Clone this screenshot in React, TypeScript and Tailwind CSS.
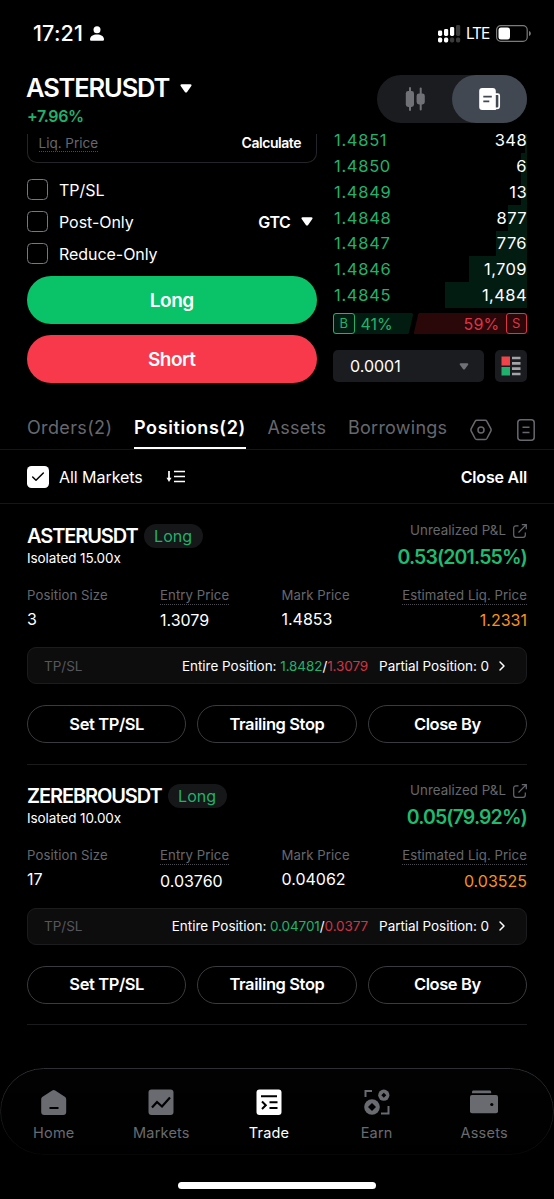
import type { ReactNode } from "react"
import { Check, ChevronRight } from "lucide-react"

// Order book bids, depth is the bar width in px
const bids = [
    { price: "1.4851", size: "348", depth: 2 },
    { price: "1.4850", size: "6", depth: 6 },
    { price: "1.4849", size: "13", depth: 6 },
    { price: "1.4848", size: "877", depth: 19 },
    { price: "1.4847", size: "776", depth: 31 },
    { price: "1.4846", size: "1,709", depth: 58 },
    { price: "1.4845", size: "1,484", depth: 82 },
]

const positions = [
    {
        symbol: "ASTERUSDT",
        mode: "Isolated 15.00x",
        pnl: "0.53(201.55%)",
        size: "3",
        entry: "1.3079",
        mark: "1.4853",
        liq: "1.2331",
        takeProfit: "1.8482",
        stopLoss: "1.3079",
    },
    {
        symbol: "ZEREBROUSDT",
        mode: "Isolated 10.00x",
        pnl: "0.05(79.92%)",
        size: "17",
        entry: "0.03760",
        mark: "0.04062",
        liq: "0.03525",
        takeProfit: "0.04701",
        stopLoss: "0.0377",
    },
]

type Position = (typeof positions)[number]

function Caret({ className }: { className?: string }) {
    return (
        <svg viewBox="0 0 12 9" className={className} fill="currentColor">
            <path d="M1.6 0.3h8.8c1 0 1.5 1 .9 1.8L7.1 7.9c-.5.8-1.7.8-2.2 0L.7 2.1C.1 1.3.6.3 1.6.3z" />
        </svg>
    )
}

function StatusBar() {
    return (
        <div className="flex h-[67px] items-center justify-between pl-[33px] pr-[23px]">
            <div className="flex items-center gap-[7px]">
                <span className="text-[21.5px] font-medium tracking-[0.2px]">17:21</span>
                <svg viewBox="0 0 14 15" className="h-[15px] w-[14px]" fill="currentColor">
                    <circle cx="7" cy="3.7" r="3.5" />
                    <path d="M0 13.2C.3 10.3 3 8.6 7 8.6s6.7 1.7 7 4.6c0 1-.6 1.5-1.5 1.5h-11C.6 14.7 0 14.2 0 13.2z" />
                </svg>
            </div>
            <div className="flex items-center">
                <svg viewBox="0 0 23 18" className="mr-[5px] h-[18px] w-[23px]" fill="currentColor">
                    <rect x="0" y="5.5" width="4.2" height="5.5" rx="1.4" />
                    <rect x="6" y="4" width="4.2" height="7" rx="1.4" />
                    <rect x="12" y="2" width="4.2" height="9" rx="1.4" />
                    <rect x="18" y="0" width="4.2" height="11" rx="1.4" fill="#3a3a3a" />
                    <rect x="0" y="12.6" width="4.2" height="4.8" rx="1.6" />
                    <rect x="6" y="12.6" width="4.2" height="4.8" rx="1.6" />
                    <rect x="12" y="12.6" width="4.2" height="4.8" rx="1.6" fill="#3a3a3a" />
                    <rect x="18" y="12.6" width="4.2" height="4.8" rx="1.6" fill="#3a3a3a" />
                </svg>
                <span className="mr-[7px] text-[15.5px] tracking-[-1.2px]">LTE</span>
                <svg viewBox="0 0 35 17" className="h-[17px] w-[35px]">
                    <rect x="0.6" y="0.6" width="30.6" height="15.8" rx="4.2" fill="none" stroke="#7b7b7b" strokeWidth="1.2" />
                    <rect x="2.5" y="2.5" width="11.5" height="12" rx="2.5" fill="white" />
                    <path d="M33 6v5c1.3-.5 1.8-1.5 1.8-2.5S34.3 6.5 33 6z" fill="#7b7b7b" />
                </svg>
            </div>
        </div>
    )
}

function Header() {
    return (
        <header className="flex h-[67px] justify-between pl-[26px] pr-[27px]">
            <div>
                <div className="flex h-[42px] items-center gap-[11px]">
                    <h1 className="text-[25.5px] font-semibold tracking-[-1.15px]">ASTERUSDT</h1>
                    <Caret className="h-[9px] w-[12px]" />
                </div>
                <p className="ml-px mt-[-3px] text-[16px] font-semibold leading-[20px] tracking-[-0.4px] text-[#20b26c]">+7.96%</p>
            </div>
            <div className="mt-2 flex h-12 w-[150px] rounded-full bg-[#1b1c20]">
                <div className="flex w-[75px] items-center justify-center">
                    <svg viewBox="0 0 20 24" className="h-6 w-5" fill="#6f7176">
                        <rect x="0.8" y="4" width="8.2" height="16" rx="2.4" />
                        <rect x="4" y="0" width="2" height="24" rx="1" />
                        <rect x="11.6" y="6.5" width="8.2" height="11" rx="2.4" />
                        <rect x="14.7" y="0.5" width="2" height="23" rx="1" />
                    </svg>
                </div>
                <div className="flex w-[75px] items-center justify-center rounded-full bg-[#414852]">
                    <svg viewBox="0 0 22 22" className="h-[22px] w-[22px]">
                        <path d="M15 6.2h3.8c.9 0 1.4.5 1.4 1.4v10.6c0 1.4-.9 2.2-2.2 2.2h-4" fill="none" stroke="white" strokeWidth="1.7" />
                        <path d="M3.2 0h10.6c1.9 0 3 1.1 3 3v17c0 .8-.1 1.400.2 2H3.200C1.300 22 .2 20.900.2 19V3c0-1.900 1.100-3 3-3z" fill="white" />
                        <path d="M4.3 8.7h8.5M4.3 13.3h6" stroke="#414852" strokeWidth="1.7" />
                    </svg>
                </div>
            </div>
        </header>
    )
}

function Option({ label, children }: { label: string; children?: ReactNode }) {
    return (
        <div className="flex h-8 items-center">
            <span className="mr-[11px] size-[21.5px] rounded-[4.5px] border border-[#77787c]" />
            <span className="text-[16px] tracking-[-0.05px]">{label}</span>
            {children}
        </div>
    )
}

function OrderForm() {
    return (
        <div className="w-[290.5px]">
            <div className="flex h-[29px] items-start justify-between rounded-b-[10px] border border-t-0 border-[#242528] pl-[11px] pr-[15px]">
                <span className="mt-px border-b border-dotted border-[#4b4d52] text-[13.5px] leading-4 text-[#66686d]">Liq. Price</span>
                <span className="text-[14px] font-semibold leading-[18px] tracking-[-0.45px]">Calculate</span>
            </div>
            <div className="mt-[10.5px]">
                <Option label="TP/SL" />
                <Option label="Post-Only">
                    <span className="ml-auto mr-[10px] text-[16px] font-semibold tracking-[-0.4px]">GTC</span>
                    <Caret className="mr-[4.5px] h-[9px] w-[12px]" />
                </Option>
                <Option label="Reduce-Only" />
            </div>
            <button className="mt-[6.5px] block h-12 w-full rounded-full bg-[#0ac268] pt-[2px] text-[19px] font-semibold tracking-[-0.4px]">Long</button>
            <button className="mt-[11px] block h-12 w-full rounded-full bg-[#f8384b] pt-[2px] text-[19px] font-semibold tracking-[-0.5px]">Short</button>
        </div>
    )
}

function OrderBook() {
    return (
        <div className="w-[194px]">
            <div className="flex flex-col">
                {bids.map((bid) => (
                    <div
                        key={bid.price}
                        className="relative flex h-[25.8px] items-center justify-between text-[16.5px] leading-3 first:h-[19.2px] first:items-start"
                    >
                        <span className="absolute inset-y-0 right-0 bg-[#031c12]" style={{ width: bid.depth }} />
                        <span className="pl-px tracking-[0.7px] text-[#20b26c]">{bid.price}</span>
                        <span className="relative tracking-[0.4px]">{bid.size}</span>
                    </div>
                ))}
            </div>
            <div className="relative mt-[5px] flex h-[21.5px] items-center justify-between text-[16px]">
                <svg viewBox="0 0 194 21" preserveAspectRatio="none" className="absolute inset-0 h-full w-full">
                    <path d="M3 0h75c1.5 0 2.3.8 2 2l-4 17c-.4 1.4-1 2-2.5 2H3c-2 0-3-1-3-3V3c0-2 1-3 3-3z" fill="#031c12" />
                    <path d="M87 0h104c2 0 3 1 3 3v15c0 2-1 3-3 3H83c-1.5 0-2.3-.8-2-2l4-17c.3-1.4 1-2 2-2z" fill="#2a0709" />
                </svg>
                <div className="relative flex items-center gap-[6px] text-[#20b26c]">
                    <span className="flex size-[21.5px] items-center justify-center rounded-[3px] border-[1.5px] border-[#20b26c] text-[13px]">B</span>
                    <span>41%</span>
                </div>
                <div className="relative flex items-center gap-[6px] text-[#dd3547]">
                    <span className="tracking-[0.2px]">59%</span>
                    <span className="flex size-[21.5px] items-center justify-center rounded-[3px] border-[1.5px] border-[#dd3547] text-[13px]">S</span>
                </div>
            </div>
            <div className="mt-4 flex h-8 justify-between">
                <div className="flex w-[151px] items-center justify-between rounded-[5px] bg-[#1b1c20] pl-[17px] pr-[15px]">
                    <span className="text-[16px]">0.0001</span>
                    <Caret className="h-[7px] w-[10px] text-[#6f7176]" />
                </div>
                <div className="flex w-8 items-center justify-center rounded-[5px] bg-[#1b1c20]">
                    <svg viewBox="0 0 20 20" className="size-5">
                        <rect x="0.5" y="0.5" width="8.5" height="9" fill="#ef454a" />
                        <rect x="0.5" y="11" width="8.5" height="8.5" fill="#20b26c" />
                        <path d="M11 2h8.5M11 7.3h8.5M11 12.6h8.5M11 18h8.5" stroke="#a2a4a9" strokeWidth="2.7" />
                    </svg>
                </div>
            </div>
        </div>
    )
}

function Tabs() {
    return (
        <nav className="flex h-[43px] items-stretch border-b border-[#151618] pl-[27px] text-[18px] leading-[42px] text-[#66686d]">
            <span className="w-[107px] tracking-[0.35px]">Orders(2)</span>
            <span className="relative w-[112px] font-semibold tracking-[0.6px] text-white">
                Positions(2)
                <span className="absolute inset-x-0 bottom-0 h-[2.5px] bg-white" />
            </span>
            <span className="ml-[21.5px] w-[80.5px] tracking-[0.25px]">Assets</span>
            <span className="w-[121.5px] tracking-[0.25px]">Borrowings</span>
            <svg viewBox="0 0 22 22" className="mt-[11.5px] size-[22px]" fill="none" stroke="currentColor" strokeWidth="1.5">
                <path d="M6.8 1.3h8.4c.8 0 1.3.3 1.7 1l3.9 7.4c.4.8.4 1.6 0 2.4l-3.9 7.4c-.4.7-.9 1-1.7 1H6.8c-.8 0-1.3-.3-1.7-1l-3.9-7.4c-.4-.8-.4-1.6 0-2.4l3.9-7.4c.4-.7.9-1 1.7-1z" />
                <circle cx="11" cy="11" r="3" />
            </svg>
            <svg viewBox="0 0 18 22" className="ml-[25px] mt-[11.5px] h-[22px] w-[18px]" fill="none" stroke="currentColor" strokeWidth="1.5">
                <rect x="0.8" y="0.8" width="16.4" height="20.4" rx="3" />
                <path d="M5.5 8.3h7M5.5 13.5h7" />
            </svg>
        </nav>
    )
}

function MarketFilter() {
    return (
        <div className="flex h-[54px] items-center border-b border-[#151618] px-[27px] text-[16px]">
            <span className="mr-[10.5px] flex size-[21.5px] items-center justify-center rounded-[4.5px] bg-white text-black">
                <Check className="size-4" strokeWidth={2.2} />
            </span>
            <span className="tracking-[-0.05px]">All Markets</span>
            <svg viewBox="0 0 19 13" className="ml-[23px] h-[13px] w-[19px]" fill="none" stroke="white" strokeWidth="1.7">
                <path d="M8 1.5h11M8 6.5h11M8 11.5h11M3 1v8" />
                <path d="M0.5 7.8h5L3 12z" fill="white" stroke="none" />
            </svg>
            <span className="ml-auto font-semibold tracking-[-0.2px]">Close All</span>
        </div>
    )
}

function Stat({ label, value, underline, className = "" }: { label: string; value: string; underline?: boolean; className?: string }) {
    return (
        <div className={className}>
            <div className="text-[13.2px] leading-[18px] tracking-[0.08px] text-[#66686d]">
                {underline ? <span className="inline-block border-b border-dotted border-[#4b4d52] leading-[18px]">{label}</span> : label}
            </div>
            <div className={underline ? "mt-[3.5px] text-[16px] leading-6" : "mt-[3px] text-[16px] leading-6"}>{value}</div>
        </div>
    )
}

function PositionCard({ position }: { position: Position }) {
    return (
        <section className="mx-[27px] h-[260.3px] border-b border-[#1a1b1d] pt-[17.5px]">
            <div className="flex h-[48px] justify-between">
                <div>
                    <div className="flex h-[28px] items-center gap-[6px]">
                        <h2 className="text-[20px] font-semibold tracking-[-1.1px]">{position.symbol}</h2>
                        <span className="flex h-6 w-[59px] items-center justify-center rounded-full bg-[#151719] text-[16px] text-[#20b26c]">Long</span>
                    </div>
                    <p className="text-[13.5px] leading-[16px] tracking-[-0.1px]">{position.mode}</p>
                </div>
                <div className="text-right">
                    <div className="flex h-[18px] items-center justify-end gap-[7px] text-[13.3px] tracking-[0.05px] text-[#66686d]">
                        Unrealized P&L
                        <svg viewBox="0 0 14 14" className="size-[14px]" fill="none" stroke="currentColor" strokeWidth="1.2">
                            <path d="M5.5 1.8H3C1.5 1.8.7 2.6.7 4v7c0 1.5.8 2.3 2.3 2.3h7c1.5 0 2.3-.8 2.3-2.3V8.5M5.5 8.5l7.5-7.6M8.8.7h4.5v4.5" />
                        </svg>
                    </div>
                    <p className="mt-[5px] text-[19.5px] font-semibold leading-6 tracking-[-0.88px] text-[#1fbb71]">{position.pnl}</p>
                </div>
            </div>
            <div className="mt-[16px] flex h-[61.5px]">
                <Stat label="Position Size" value={position.size} className="w-[133px]" />
                <Stat label="Entry Price" value={position.entry} className="w-[121.5px]" underline />
                <Stat label="Mark Price" value={position.mark} />
                <Stat label="Estimated Liq. Price" value={position.liq} className="ml-auto text-right [&>div:last-child]:text-[#f7931a]" underline />
            </div>
            <div className="flex h-[37px] items-center rounded-[9px] border border-[#1b1c1e] bg-[#0d0d0e] pl-4 pr-[16px] text-[13.5px]">
                <span className="text-[#55575c]">TP/SL</span>
                <span className="ml-auto tracking-[-0.03px]">
                    Entire Position: <span className="tracking-[-0.1px] text-[#20b26c]">{position.takeProfit}</span>/<span className="tracking-[-0.1px] text-[#cf3445]">{position.stopLoss}</span>
                </span>
                <span className="ml-[11px] tracking-[-0.05px]">Partial Position: 0</span>
                <ChevronRight className="ml-[5px] size-4" strokeWidth={2.2} />
            </div>
            <div className="mt-[21px] grid grid-cols-3 gap-[11px] text-[16.5px] font-semibold tracking-[-0.4px]">
                <button className="h-[38px] rounded-full border border-[#3a3b3e]">Set TP/SL</button>
                <button className="h-[38px] rounded-full border border-[#3a3b3e]">Trailing Stop</button>
                <button className="h-[38px] rounded-full border border-[#3a3b3e]">Close By</button>
            </div>
        </section>
    )
}

const navItems = [
    {
        title: "Home",
        icon: (
            <>
                <path d="M12.2 1.4c1-.7 2-.7 3 0l9.6 6.4c1 .7 1.4 1.5 1.4 2.7V23c0 2-1 3-3 3H4.2c-2 0-3-1-3-3V10.5c0-1.2.4-2 1.4-2.7z" fill="currentColor" />
                <path d="M9.5 19h9" stroke="#000" strokeWidth="2" />
            </>
        ),
    },
    {
        title: "Markets",
        icon: (
            <>
                <rect x="1.5" y="0.5" width="25" height="25.5" rx="3" fill="currentColor" />
                <path d="M5 18.5l5-5.5 5 4.5 8-9" fill="none" stroke="#000" strokeWidth="2.2" />
            </>
        ),
    },
    {
        title: "Trade",
        icon: (
            <>
                <rect x="1.5" y="0.5" width="25" height="25.5" rx="3" fill="currentColor" />
                <path d="M6 7.3h16M14.5 13.3h8M14.5 19h8M7 12.5l3.8 3.7L7 20" fill="none" stroke="#000" strokeWidth="2" />
            </>
        ),
    },
    {
        title: "Earn",
        icon: (
            <>
                <path d="M2.5 8V2h6.5M25.5 17v7.5H18" fill="none" stroke="currentColor" strokeWidth="2" />
                <circle cx="9" cy="18" r="7.8" fill="currentColor" />
                <circle cx="20.8" cy="6.2" r="5.6" fill="currentColor" />
                <path d="M9 14l4 4-4 4-4-4zM20.8 3.7l2.5 2.5-2.5 2.5-2.5-2.5z" fill="#000" />
            </>
        ),
    },
    {
        title: "Assets",
        icon: (
            <>
                <path d="M3.5 1.5h16c1 0 1.7.7 1.7 1.7v1H2v-1c0-1 .5-1.7 1.5-1.7z" fill="currentColor" />
                <rect x="0" y="6" width="28" height="18.2" rx="2" fill="currentColor" />
                <circle cx="21.8" cy="15.5" r="1.6" fill="#000" />
            </>
        ),
    },
]

function BottomNav() {
    return (
        <nav className="relative h-[87px] pt-[20.5px]">
            <div className="absolute inset-0 rounded-full border border-[#2e2f32] bg-[#020203] [mask-image:linear-gradient(to_bottom,black,rgba(0,0,0,0.15))]" />
            <div className="relative grid grid-cols-5 pr-4">
                {navItems.map((item) => (
                    <div
                        key={item.title}
                        className={item.title === "Trade" ? "flex flex-col items-center text-white" : "flex flex-col items-center text-[#696b70]"}
                    >
                        <svg viewBox="0 0 28 27" className="h-[27px] w-7">
                            {item.icon}
                        </svg>
                        <span className="mt-[7px] text-[14.5px] leading-5 tracking-[0.2px]">{item.title}</span>
                    </div>
                ))}
            </div>
        </nav>
    )
}

export default function App() {
    return (
        <div className="relative flex h-[1199px] w-[554px] flex-col overflow-hidden bg-black font-[Inter,sans-serif] text-white">
            <StatusBar />
            <Header />
            <main>
                <div className="flex justify-between pl-[26.5px] pr-[27px]">
                    <OrderForm />
                    <OrderBook />
                </div>
                <div className="mt-[24.4px]">
                    <Tabs />
                    <MarketFilter />
                </div>
                {positions.map((position) => (
                    <PositionCard key={position.symbol} position={position} />
                ))}
            </main>
            <div className="mt-auto">
                <BottomNav />
                <div className="mx-auto mb-[10.5px] mt-[26.5px] h-[7px] w-[198px] rounded-full bg-white" />
            </div>
        </div>
    )
}
